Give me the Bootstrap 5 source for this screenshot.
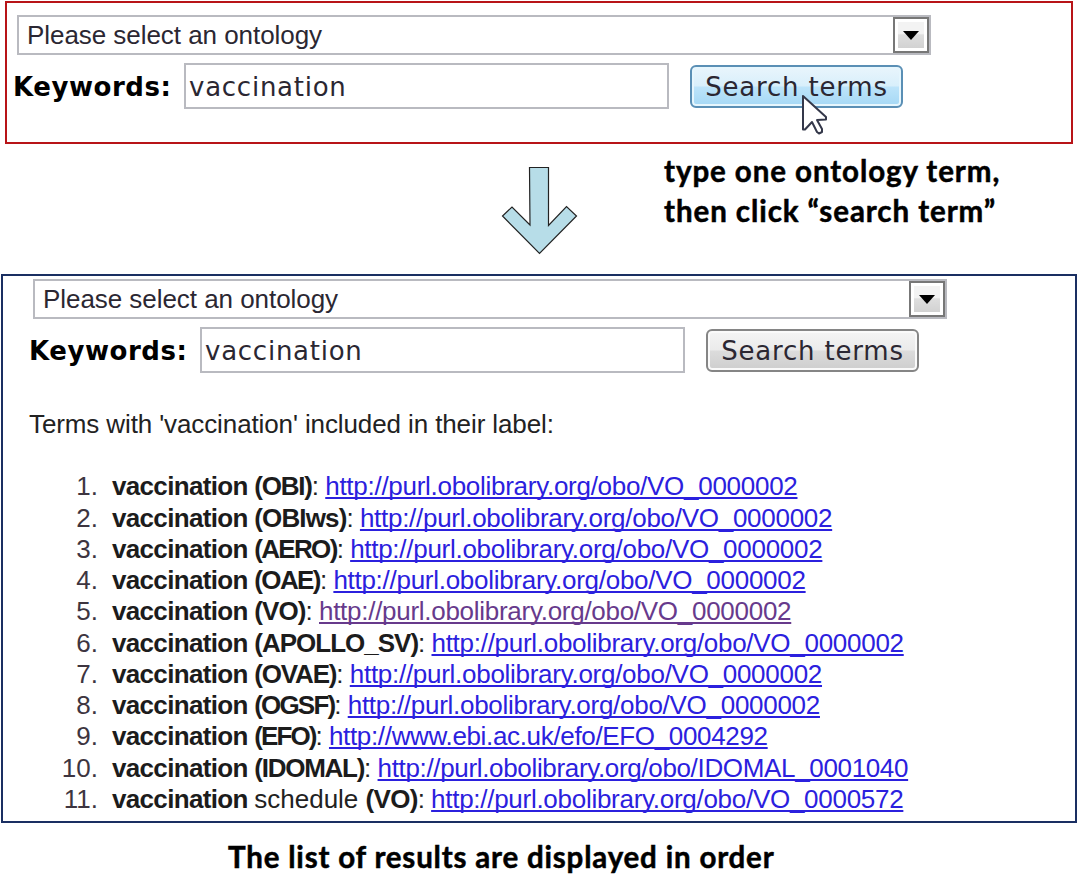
<!DOCTYPE html>
<html lang="en">
<head>
<meta charset="utf-8">
<title>Ontology term search</title>
<link href="https://cdn.jsdelivr.net/npm/bootstrap@5.3.0/dist/css/bootstrap.min.css" rel="stylesheet">
<style>
body{font:26px/31.25px "Liberation Sans",Arial,sans-serif;color:#222;width:1078px;height:878px;overflow:hidden}
.step-query{margin:1px 5px 0 5px;height:143px;border:2px solid #b81418;padding:12px 0 0 6px}
.step-results{margin:0 1px 0 1px;height:549px;border:2px solid #1a2f62;padding:3px 0 0 26px}
.picker{width:914px;height:40px;border:2px solid #b9bac0;margin-left:4px;padding-left:8px;letter-spacing:-.05px;color:#2b2732}
.picker>span:first-child{padding-top:1px}
.drop{width:36px;height:36px;border:2px solid #777;background:linear-gradient(#f3f3f3 45%,#dedede 50%,#cfcfcf);box-shadow:inset 0 0 0 3px #fff}
.wide{font-family:"DejaVu Sans",Verdana,sans-serif}
.kw-label{width:171px;font-weight:700;color:#000;letter-spacing:.55px;padding-top:3px}
.kw{width:485px;height:46px;border:2px solid #b9bac0;padding:3px 0 0 3px;letter-spacing:.75px;color:#2b2732}
.go{display:block;width:213px;height:43px;margin-left:21px;border:2px solid #858585;border-radius:6px;background:linear-gradient(#f4f4f4,#ebebeb 49%,#dcdcdc 51%,#cecece);box-shadow:inset 0 0 0 2px #fafafa;color:#2b2732;padding:4px 0 0;letter-spacing:.8px}
.go.hot{border-color:#5a8fb5;background:linear-gradient(#e9f5fc,#d8effb 49%,#bde4fa 51%,#a5d8f5);box-shadow:inset 0 0 0 2px #e6f6fd}
.pointer{left:132px;top:28px}
.between{height:130px}
.arrow{margin:22px 0 0 501px}
.note{font-family:Lato,Carlito,sans-serif;font-weight:700;font-size:29.5px;letter-spacing:.85px;line-height:40px;color:#000;white-space:nowrap;-webkit-text-stroke:.5px #000}
.note-query{margin:7px 0 0 85px;letter-spacing:.93px}
.note-results{margin:14px 0 0 228px;letter-spacing:.81px}
.found{margin:36px 0 0 0;letter-spacing:-.11px}
.terms{margin:31px 0 0;padding:0;list-style:none}
.num{width:69px;text-align:right;margin-right:14px;color:#3d3540}
.terms b{color:#1c1c1c;letter-spacing:-.67px}
.terms .src{letter-spacing:var(--fit)}
.sep{letter-spacing:-.5px}
.terms a{color:#2b20de;text-decoration-thickness:2px;text-underline-offset:2px;text-decoration-skip-ink:none;letter-spacing:-.28px}
.terms a.seen{color:#673a8c}
.terms a.long{letter-spacing:-.34px}
</style>
</head>
<body class="bg-white">
<section class="step-query">
  <div class="picker d-flex justify-content-between align-items-center"><span>Please select an ontology</span>
    <span class="drop d-flex align-items-center justify-content-center"><svg width="16" height="9"><path d="M0 0H16L8 9Z" fill="#000"/></svg></span></div>
  <div class="wide d-flex align-items-center mt-2">
    <span class="kw-label">Keywords:</span><div class="kw d-flex align-items-center">vaccination</div>
    <div class="position-relative"><button class="go hot">Search terms</button>
      <svg class="pointer position-absolute" width="30" height="42" viewBox="0 0 30 42"><path d="M2 3V36.500H4L11 29L16 39L18 40.500L21 39L21 36L16 27L25 26.500V24Z" fill="#fff" stroke="#34384a" stroke-width="2" stroke-linejoin="round"/></svg></div>
  </div>
</section>
<div class="between d-flex">
  <svg class="arrow flex-shrink-0" width="78" height="90" viewBox="0 0 78 90"><path d="M28.500 1.500H47.500V59.500L65.500 40.500L75.500 50L38.500 87.500L1.500 50L11 41L29 59Z" fill="#b7dde8" stroke="#222" stroke-width="1.200"/></svg>
  <div class="note note-query">type one ontology term,<br>then click “search term”</div>
</div>
<section class="step-results">
  <div class="picker d-flex justify-content-between align-items-center"><span>Please select an ontology</span>
    <span class="drop d-flex align-items-center justify-content-center"><svg width="16" height="9"><path d="M0 0H16L8 9Z" fill="#000"/></svg></span></div>
  <div class="wide d-flex align-items-center mt-2">
    <span class="kw-label">Keywords:</span><div class="kw d-flex align-items-center">vaccination</div>
    <button class="go">Search terms</button>
  </div>
  <div class="found">Terms with 'vaccination' included in their label:</div>
  <ol class="terms">
    <li class="d-flex"><span class="num">1.</span><div><b>vaccination </b><b class="src" style="--fit:-1.2px">(OBI)</b><span class="sep">: </span><a href="#">http://purl.obolibrary.org/obo/VO_0000002</a></div></li>
    <li class="d-flex"><span class="num">2.</span><div><b>vaccination </b><b class="src" style="--fit:-.86px">(OBIws)</b><span class="sep">: </span><a href="#">http://purl.obolibrary.org/obo/VO_0000002</a></div></li>
    <li class="d-flex"><span class="num">3.</span><div><b>vaccination </b><b class="src" style="--fit:-1.67px">(AERO)</b><span class="sep">: </span><a href="#">http://purl.obolibrary.org/obo/VO_0000002</a></div></li>
    <li class="d-flex"><span class="num">4.</span><div><b>vaccination </b><b class="src" style="--fit:-1.6px">(OAE)</b><span class="sep">: </span><a href="#">http://purl.obolibrary.org/obo/VO_0000002</a></div></li>
    <li class="d-flex"><span class="num">5.</span><div><b>vaccination </b><b class="src" style="--fit:-.9px">(VO)</b><span class="sep">: </span><a href="#" class="seen">http://purl.obolibrary.org/obo/VO_0000002</a></div></li>
    <li class="d-flex"><span class="num">6.</span><div><b>vaccination </b><b class="src" style="--fit:-1px">(APOLLO_SV)</b><span class="sep">: </span><a href="#">http://purl.obolibrary.org/obo/VO_0000002</a></div></li>
    <li class="d-flex"><span class="num">7.</span><div><b>vaccination </b><b class="src" style="--fit:-1.17px">(OVAE)</b><span class="sep">: </span><a href="#">http://purl.obolibrary.org/obo/VO_0000002</a></div></li>
    <li class="d-flex"><span class="num">8.</span><div><b>vaccination </b><b class="src" style="--fit:-1.83px">(OGSF)</b><span class="sep">: </span><a href="#">http://purl.obolibrary.org/obo/VO_0000002</a></div></li>
    <li class="d-flex"><span class="num">9.</span><div><b>vaccination </b><b class="src" style="--fit:-1.9px">(EFO)</b><span class="sep">: </span><a href="#" class="long">http://www.ebi.ac.uk/efo/EFO_0004292</a></div></li>
    <li class="d-flex"><span class="num">10.</span><div><b>vaccination </b><b class="src" style="--fit:-1.25px">(IDOMAL)</b><span class="sep">: </span><a href="#" class="long">http://purl.obolibrary.org/obo/IDOMAL_0001040</a></div></li>
    <li class="d-flex"><span class="num">11.</span><div><b>vaccination </b>schedule <b class="src" style="--fit:-.7px">(VO)</b><span class="sep">: </span><a href="#">http://purl.obolibrary.org/obo/VO_0000572</a></div></li>
  </ol>
</section>
<div class="note note-results">The list of results are displayed in order</div>
<script src="https://cdn.jsdelivr.net/npm/bootstrap@5.3.0/dist/js/bootstrap.bundle.min.js"></script>
</body>
</html>
